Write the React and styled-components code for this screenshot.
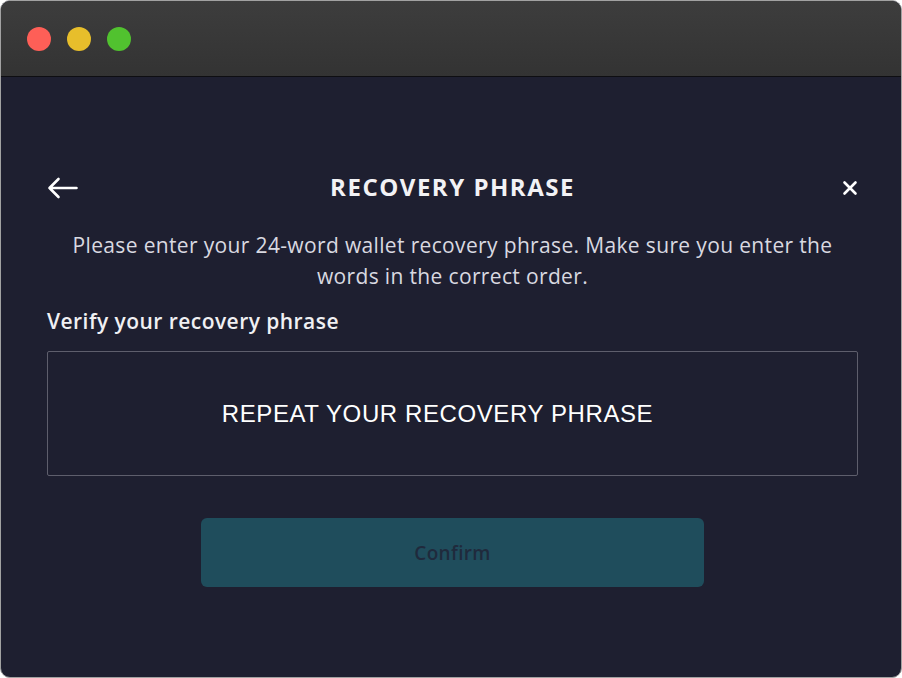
import React from "react";
import styled, { createGlobalStyle } from "styled-components";

const GlobalStyle = createGlobalStyle`
  html, body {
    margin: 0;
    padding: 0;
    background: #ffffff;
  }
  body {
    font-family: "Open Sans", "Noto Sans", sans-serif;
  }
`;

const Window = styled.div`
  width: 900px;
  height: 676px;
  border: 1px solid #a2a2a2;
  border-radius: 10px;
  overflow: hidden;
  display: flex;
  flex-direction: column;
  background: #1e1f30;
`;

const TitleBar = styled.div`
  height: 75px;
  flex-shrink: 0;
  display: flex;
  align-items: center;
  gap: 16px;
  padding-left: 26px;
  background: linear-gradient(#3d3d3d, #333333);
  border-bottom: 1px solid #0e0e12;
`;

const Light = styled.span`
  width: 24px;
  height: 24px;
  border-radius: 50%;
  background: ${(p) => p.color};
`;

const Content = styled.div`
  flex: 1;
  padding: 93px 43px 0 46px;
  display: flex;
  flex-direction: column;
`;

const Header = styled.div`
  height: 30px;
  display: grid;
  grid-template-columns: 1fr auto 1fr;
  align-items: center;
`;

const IconButton = styled.button`
  background: none;
  border: none;
  padding: 0;
  display: flex;
  align-items: center;
  justify-self: ${(p) => (p.end ? "end" : "start")};
  cursor: pointer;
`;

const Title = styled.h1`
  margin: 0 0 3px;
  font-size: 24px;
  font-weight: 700;
  letter-spacing: 1.5px;
  color: #f2f2f5;
`;

const Description = styled.p`
  margin: 30px 0 0;
  font-size: 21px;
  line-height: 31px;
  letter-spacing: 0.35px;
  text-align: center;
  color: #d9d9e0;
`;

const Label = styled.div`
  margin-top: 15px;
  font-size: 21px;
  line-height: 28px;
  letter-spacing: 0.45px;
  font-weight: 600;
  color: #f0f0f3;
`;

const PhraseBox = styled.div`
  box-sizing: border-box;
  margin-top: 16px;
  height: 125px;
  border: 1.5px solid #5e5e6c;
  border-radius: 2px;
  display: flex;
  align-items: center;
  justify-content: center;
  padding-right: 30px;
  font-family: "Liberation Sans", Arial, sans-serif;
  font-size: 24px;
  letter-spacing: 0.6px;
  color: #ffffff;
`;

const ConfirmButton = styled.button`
  margin: 42px auto 0;
  width: 503px;
  height: 69px;
  border: none;
  border-radius: 6px;
  background: #1f4d5c;
  color: #1f2a3c;
  font-family: "Open Sans", "Noto Sans", sans-serif;
  font-size: 19px;
  letter-spacing: 0.3px;
  font-weight: 600;
  cursor: default;
`;

const ArrowIcon = () => (
  <svg width="31" height="22" viewBox="0 0 31 22" fill="none">
    <path
      d="M29.5 11H2.5M11.5 2L2.5 11L11.5 20"
      stroke="#ffffff"
      strokeWidth="2.6"
      strokeLinecap="round"
      strokeLinejoin="round"
    />
  </svg>
);

const CloseIcon = () => (
  <svg width="16" height="16" viewBox="0 0 16 16" fill="none">
    <path
      d="M2.5 2.5L13.5 13.5M13.5 2.5L2.5 13.5"
      stroke="#ffffff"
      strokeWidth="2.6"
      strokeLinecap="round"
    />
  </svg>
);

const App = () => {
  return (
    <>
      <GlobalStyle />
      <Window>
        <TitleBar>
          <Light color="#fe5f57" />
          <Light color="#e7be2b" />
          <Light color="#51c22f" />
        </TitleBar>
        <Content>
          <Header>
            <IconButton aria-label="Back">
              <ArrowIcon />
            </IconButton>
            <Title>RECOVERY PHRASE</Title>
            <IconButton end aria-label="Close">
              <CloseIcon />
            </IconButton>
          </Header>
          <Description>
            Please enter your 24-word wallet recovery phrase. Make sure you
            enter the words in the correct order.
          </Description>
          <Label>Verify your recovery phrase</Label>
          <PhraseBox>REPEAT YOUR RECOVERY PHRASE</PhraseBox>
          <ConfirmButton disabled>Confirm</ConfirmButton>
        </Content>
      </Window>
    </>
  );
};

export default App;
